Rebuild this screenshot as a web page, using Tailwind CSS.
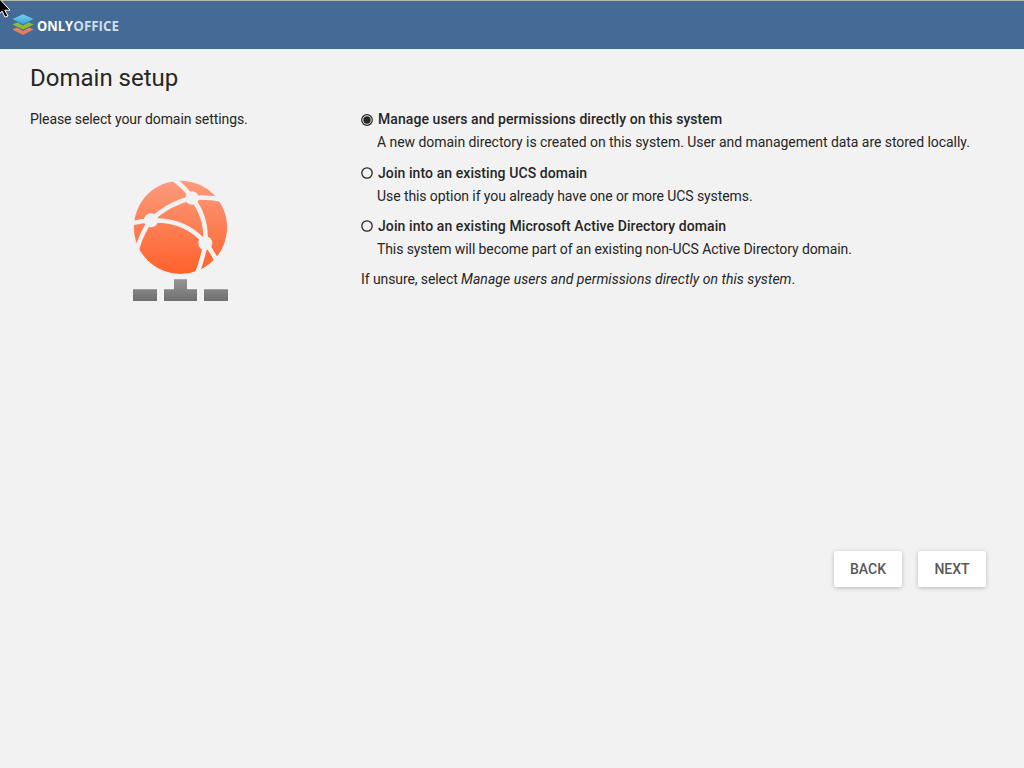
<!DOCTYPE html>
<html lang="en">
<head>
<meta charset="utf-8">
<title>Domain setup</title>
<script src="https://cdn.jsdelivr.net/npm/@tailwindcss/browser@4"></script>
</head>
<body class="relative h-screen overflow-hidden bg-[#f2f2f2] font-['Roboto',sans-serif] text-sm leading-[23px] text-[#262626]">
<header class="flex h-[49px] items-center border-t border-[#b5b9af] bg-[#446a96] pl-3">
  <svg class="h-[22px] w-[22px]" viewBox="0 0 22 22">
    <defs>
      <linearGradient id="blue" x1="0" y1="0" x2="0" y2="1"><stop stop-color="#7bd0ee"/><stop offset="1" stop-color="#35a6dc"/></linearGradient>
      <linearGradient id="red" x1="0" y1="0" x2="0" y2="1"><stop stop-color="#e2917b"/><stop offset="1" stop-color="#f0704c"/></linearGradient>
    </defs>
    <path d="M0.3 15.600L11 11L21.7 15.600L11 21Z" fill="url(#red)"/>
    <path d="M0.3 10.900L11 6.500L21.7 10.900L11 17Z" fill="#446a96"/>
    <path d="M0.3 10.400L11 6L21.7 10.400L11 15.500Z" fill="#8fbd31"/>
    <path d="M0.3 5.500L11 .5L21.7 5.500L11 11.500Z" fill="#446a96"/>
    <path d="M0.3 5L11 .2L21.7 5L11 10.200Z" fill="url(#blue)"/>
  </svg>
  <svg class="h-[22px] w-[90px]" viewBox="0 0 90 22" font-family="Open Sans, sans-serif" font-size="14">
    <text x="3" y="17" textLength="36" lengthAdjust="spacingAndGlyphs" font-weight="700" fill="#fff">ONLY</text>
    <text x="39.300" y="17" textLength="45.700" lengthAdjust="spacingAndGlyphs" font-weight="700" fill="#cfdee8">OFFICE</text>
  </svg>
</header>
<svg class="absolute top-0 left-0 h-[20px] w-[14px]" viewBox="0 0 14 20"><path d="M-5 -6L10 10.2H4.8L8 16L5 17.2L2.2 11.2L-2 15Z" fill="#000" stroke="#fff" stroke-width="1"/></svg>
<main class="px-[30px]">
  <h1 class="pt-[13px] text-2xl leading-8">Domain setup</h1>
  <div class="flex pt-[14px]">
    <aside class="w-[331px]">
      <p class="tracking-[-0.09px]">Please select your domain settings.</p>
      <svg class="mt-[49px] ml-[103px] h-[122px] w-[96px]" viewBox="133 180 96 122">
        <defs>
          <linearGradient id="globe" x1="0" y1="0" x2="0" y2="1"><stop stop-color="#fb9b7d"/><stop offset="1" stop-color="#ff612a"/></linearGradient>
          <linearGradient id="base" gradientUnits="userSpaceOnUse" x1="0" y1="279" x2="0" y2="301"><stop stop-color="#959595"/><stop offset="1" stop-color="#707070"/></linearGradient>
        </defs>
        <circle cx="180.5" cy="227.3" r="46.6" fill="url(#globe)"/>
        <g fill="none" stroke="#f2f2f2" stroke-width="4.500">
          <path d="M169 177Q182 183 192 198Q207 217 205.500 243Q203 259 196 276"/>
          <path d="M226 200.500Q208 196 192 198Q169 203 151 220Q142 232 137 249"/>
          <path d="M131 223.500Q141 221 151 220.500Q186 219 205.500 243Q213 252 218 264"/>
        </g>
        <g fill="#f2f2f2"><circle cx="192" cy="198" r="6.800"/><circle cx="151" cy="220.300" r="7"/><circle cx="205.300" cy="243.300" r="7"/></g>
        <path fill="url(#base)" d="M133 289.200h24v11.800h-24zM164 289.200h10v-10h13v10h10v11.800h-33zM204 289.200h24v11.800h-24z"/>
      </svg>
    </aside>
    <section>
      <div class="h-[54px]">
        <div class="flex items-center gap-[5px] font-medium tracking-[0.07px]"><svg class="mt-px h-3 w-3" viewBox="0 0 12 12"><circle cx="6" cy="6" r="5.300" fill="none" stroke="#262626" stroke-width="1.200"/><circle cx="6" cy="6" r="3.700" fill="#262626"/></svg>Manage users and permissions directly on this system</div>
        <p class="pl-4 tracking-[-0.05px]">A new domain directory is created on this system. User and management data are stored locally.</p>
      </div>
      <div class="h-[53px]">
        <div class="flex items-center gap-[5px] font-medium tracking-[0.08px]"><svg class="mb-px h-3 w-3" viewBox="0 0 12 12"><circle cx="6" cy="6" r="5.200" fill="none" stroke="#262626" stroke-width="1.300"/></svg>Join into an existing UCS domain</div>
        <p class="pl-4 tracking-[-0.08px]">Use this option if you already have one or more UCS systems.</p>
      </div>
      <div class="h-[53px]">
        <div class="flex items-center gap-[5px] font-medium tracking-[0.09px]"><svg class="mb-px h-3 w-3" viewBox="0 0 12 12"><circle cx="6" cy="6" r="5.200" fill="none" stroke="#262626" stroke-width="1.300"/></svg>Join into an existing Microsoft Active Directory domain</div>
        <p class="pl-4 tracking-[-0.095px]">This system will become part of an existing non-UCS Active Directory domain.</p>
      </div>
      <p class="tracking-[-0.09px]">If unsure, select <i class="tracking-[0.04px]">Manage users and permissions directly on this system</i>.</p>
    </section>
  </div>
  <footer class="mt-[249px] flex h-9 justify-end gap-4 pr-2 font-medium text-[#595959]">
    <button class="h-9 w-[68px] rounded-[2px] bg-white shadow-[0_1px_4px_rgba(0,0,0,0.26)]">BACK</button>
    <button class="h-9 w-[68px] rounded-[2px] bg-white shadow-[0_1px_4px_rgba(0,0,0,0.26)]">NEXT</button>
  </footer>
</main>
</body>
</html>
